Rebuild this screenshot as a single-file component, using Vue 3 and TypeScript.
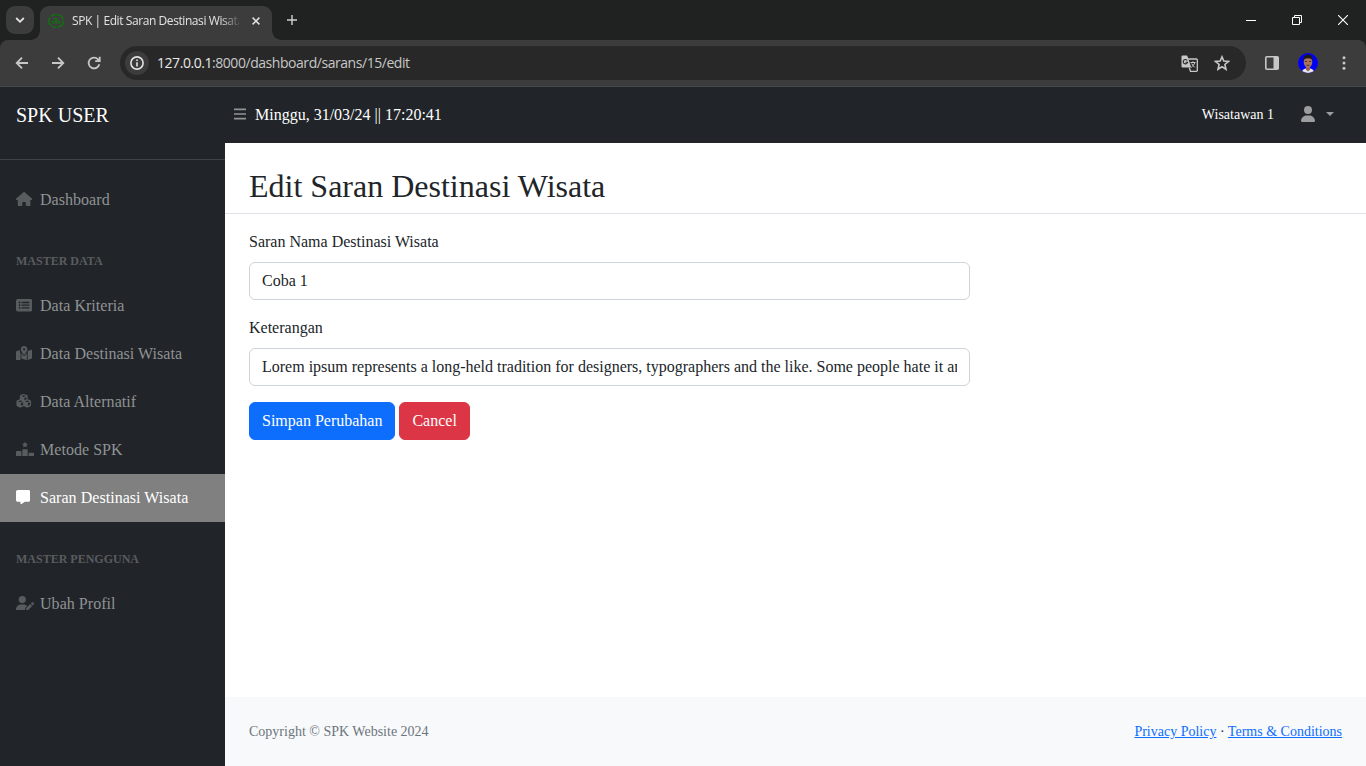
<script setup lang="ts">
import { ref } from 'vue'

interface MenuItem {
  label: string
  icon: string
  box: string
  width: number
  active?: boolean
}

interface MenuSection {
  heading: string
  items: MenuItem[]
}

const icons = {
  house:
    'M575.8 255.5c0 18-15 32.1-32 32.1h-32l.7 160.2c0 2.7-.2 5.4-.5 8.1V472c0 22.1-17.9 40-40 40H456c-1.1 0-2.2 0-3.3-.1c-1.4 .1-2.8 .1-4.2 .1H416 392c-22.1 0-40-17.9-40-40V448 384c0-17.7-14.3-32-32-32H256c-17.7 0-32 14.3-32 32v64 24c0 22.1-17.9 40-40 40H160 128.1c-1.5 0-3-.1-4.5-.2c-1.2 .1-2.4 .2-3.6 .2H104c-22.1 0-40-17.9-40-40V360c0-.9 0-1.9 .1-2.8V287.6H32c-18 0-32-14-32-32.1c0-9 3-17 10-24L266.4 8c7-7 15-8 22-8s15 2 21 7L564.8 231.5c8 7 12 15 11 24z',
  list:
    'M64 32h448a64 64 0 0 1 64 64v320a64 64 0 0 1-64 64H64a64 64 0 0 1-64-64V96a64 64 0 0 1 64-64zM96 160a32 32 0 1 0 64 0a32 32 0 1 0-64 0zM96 256a32 32 0 1 0 64 0a32 32 0 1 0-64 0zM96 352a32 32 0 1 0 64 0a32 32 0 1 0-64 0zM216 136a24 24 0 0 0 0 48h240a24 24 0 0 0 0-48zM216 232a24 24 0 0 0 0 48h240a24 24 0 0 0 0-48zM216 328a24 24 0 0 0 0 48h240a24 24 0 0 0 0-48z',
  map:
    'M408 120c0 54.6-73.1 151.9-105.2 192c-7.7 9.6-22 9.6-29.6 0C241.1 271.9 168 174.6 168 120C168 53.7 221.7 0 288 0s120 53.7 120 120zM288 160a40 40 0 1 0 0-80a40 40 0 1 0 0 80zM425 180l118-47c16-6 33 5 33 22v269c0 10-6 19-15 22L416 503V202c3-7 6-15 9-22zM138 202c5 15 12 31 22 47v253L33 504C17 510 0 499 0 482V213c0-10 6-19 15-22l122-49c1 20 1 40 1 60zM327 332c14-17 35-45 57-79v250l-192-55V253c22 34 43 62 57 79c20 26 58 26 78 0z',
  cubes:
    'M290 3c-8-3-16-3-24 0L176 38c-16 6-26 21-26 37v112L55 224c-16 7-27 22-27 39v138c0 16 9 30 24 37l94 43c11 5 24 5 35 0l107-50l107 50c11 5 24 5 35 0l94-43c15-7 24-21 24-37V263c0-17-11-32-27-39l-95-37V75c0-16-10-31-26-37zM288 45l76 29l-76 31l-76-31zM310 145l74-30v72l-74 31zM166 227l78 30l-78 33l-78-33zM188 328l78-33v85l-78 37zM410 227l78 30l-78 33l-78-33zM432 328l78-33v85l-78 37z',
  ranking:
    'M353.8 54.1L330.2 6.3c-3.9-8.3-16.1-8.6-20.4 0L286.2 54.1l-52.3 7.5c-9.3 1.4-13.3 12.9-6.4 19.8l38 37-9 52.1c-1.4 9.3 8.2 16.5 16.8 12.2l46.9-24.8 46.6 24.4c8.6 4.3 18.3-2.9 16.8-12.2l-9-52.1 38-36.6c6.8-6.8 2.9-18.3-6.4-19.8zM256 256c-17.7 0-32 14.3-32 32v192c0 17.7 14.3 32 32 32h128c17.7 0 32-14.3 32-32V288c0-17.7-14.3-32-32-32zM32 320c-17.7 0-32 14.3-32 32v128c0 17.7 14.3 32 32 32h128c17.7 0 32-14.3 32-32V352c0-17.7-14.3-32-32-32zM448 416v64c0 17.7 14.3 32 32 32h128c17.7 0 32-14.3 32-32v-64c0-17.7-14.3-32-32-32H480c-17.7 0-32 14.3-32 32z',
  message:
    'M64 0C28.7 0 0 28.7 0 64V352c0 35.3 28.7 64 64 64h96v80c0 6.1 3.4 11.6 8.8 14.3s11.9 2.1 16.8-1.5L309.3 416H448c35.3 0 64-28.7 64-64V64c0-35.3-28.7-64-64-64z',
  userPen:
    'M224 256A128 128 0 1 0 224 0a128 128 0 1 0 0 256zm-45.7 48C79.8 304 0 383.8 0 482.3C0 498.7 13.3 512 29.7 512H322.8c-3.1-8.8-3.7-18.4-1.4-27.8l15-60.1c2.8-11.3 8.6-21.5 16.8-29.7l40.3-40.3c-32.1-31-75.7-50.1-123.9-50.1H178.3zm435.5-68.3c-15.6-15.6-40.9-15.6-56.6 0l-29.4 29.4 71 71 29.4-29.4c15.6-15.6 15.6-40.9 0-56.6l-14.4-14.4zM375.9 417c-4.1 4.1-7 9.2-8.4 14.9l-15 60.1c-1.4 5.5 .2 11.2 4.2 15.2s9.7 5.6 15.2 4.2l60.1-15c5.6-1.4 10.8-4.3 14.9-8.4L576.1 358.7l-71-71L375.9 417z',
  user:
    'M224 256A128 128 0 1 0 224 0a128 128 0 1 0 0 256zm-45.7 48C79.8 304 0 383.8 0 482.3C0 498.7 13.3 512 29.7 512H418.3c16.4 0 29.7-13.3 29.7-29.7C448 383.8 368.2 304 269.7 304H178.3z',
}

const sections: MenuSection[] = [
  {
    heading: '',
    items: [{ label: 'Dashboard', icon: icons.house, box: '0 0 576 512', width: 16.2 }],
  },
  {
    heading: 'Master Data',
    items: [
      { label: 'Data Kriteria', icon: icons.list, box: '0 0 576 512', width: 16.2 },
      { label: 'Data Destinasi Wisata', icon: icons.map, box: '0 0 576 512', width: 16.2 },
      { label: 'Data Alternatif', icon: icons.cubes, box: '28 0 520 512', width: 15.5 },
      { label: 'Metode SPK', icon: icons.ranking, box: '0 0 640 512', width: 18 },
      { label: 'Saran Destinasi Wisata', icon: icons.message, box: '0 0 512 512', width: 14.4, active: true },
    ],
  },
  {
    heading: 'Master Pengguna',
    items: [{ label: 'Ubah Profil', icon: icons.userPen, box: '0 0 640 512', width: 18 }],
  },
]

const nama = ref('Coba 1')
const keterangan = ref(
  'Lorem ipsum represents a long-held tradition for designers, typographers and the like. Some people hate it and argue for its demise, but others ignore the hate.',
)
</script>

<template>
  <div class="window">
    <header class="tabstrip">
      <button class="tab-search" aria-label="Search tabs">
        <svg width="10" height="10" viewBox="0 0 10 10"><path d="M1.2 3L5 6.8L8.8 3" fill="none" stroke="#e3e3e3" stroke-width="1.8" /></svg>
      </button>
      <div class="tab">
        <svg class="favicon" width="16" height="16" viewBox="0 0 16 16" fill="none" stroke="#0b7a0b">
          <ellipse cx="8" cy="8" rx="7.3" ry="6.3" stroke-width="1.3" stroke-dasharray="9 1.2 5 .8" />
          <path d="M5.500 5.500h4M4 8.500h2M7 8.500h2M10 8.500h2M6 7h4.500M3.500 10h9" stroke-width=".9" />
        </svg>
        <span class="tab-title">SPK | Edit Saran Destinasi Wisata</span>
        <svg class="tab-close" width="8" height="8" viewBox="0 0 8 8"><path d="M.6.6L7.4 7.4M7.4.6L.6 7.4" stroke="#e3e3e3" stroke-width="1.5" /></svg>
      </div>
      <svg class="new-tab" width="12" height="12" viewBox="0 0 12 12"><path d="M6 1v10M1 6h10" stroke="#d0d0d0" stroke-width="1.4" /></svg>
      <div class="window-controls">
        <svg width="10" height="10" viewBox="0 0 10 10"><path d="M0 5.500h10" stroke="#fff" /></svg>
        <svg width="10" height="10" viewBox="0 0 10 10" fill="none" stroke="#fff"><path d="M.5 2.500h7v7h-7zM2.500 2.500v-2h7v7h-2" /></svg>
        <svg width="10" height="10" viewBox="0 0 10 10"><path d="M0 0L10 10M10 0L0 10" stroke="#fff" stroke-width="1.1" /></svg>
      </div>
    </header>

    <div class="toolbar">
      <div class="nav-buttons">
        <svg width="14" height="14" viewBox="0 0 14 14" fill="none" stroke="#c7c7c7" stroke-width="1.8"><path d="M13 7H2M7 1.7L1.7 7L7 12.3" /></svg>
        <svg width="14" height="14" viewBox="0 0 14 14" fill="none" stroke="#c7c7c7" stroke-width="1.8"><path d="M1 7H12M7 1.7L12.3 7L7 12.3" /></svg>
        <svg width="14" height="14" viewBox="0 0 14 14" fill="none" stroke="#c7c7c7" stroke-width="1.8"><path d="M12.3 8.2A5.400 5.400 0 1 1 11 3.3L12.5 5M12.7.8V5.2H8.2" /></svg>
      </div>
      <div class="omnibox">
        <span class="site-info">
          <svg width="14" height="14" viewBox="0 0 14 14"><circle cx="7" cy="7" r="6.1" fill="none" stroke="#e3e3e3" stroke-width="1.6" /><path d="M7 6.2v4.300M7 3.500v1.500" stroke="#e3e3e3" stroke-width="1.6" /></svg>
        </span>
        <span class="url"><b>127.0.0.1</b>:8000/dashboard/sarans/15/edit</span>
        <svg class="translate" width="17" height="17" viewBox="0 0 17 17">
          <path d="M1.500 .5H6l1 2h0l3.200 10H1.500a1 1 0 0 1-1-1V1.500a1 1 0 0 1 1-1z" fill="#c7c7c7" />
          <path d="M7.200 4H15.500a.8.8 0 0 1 .8.8V15.500a.8.8 0 0 1-.8.8H9.500L8.300 12.800" fill="none" stroke="#c7c7c7" stroke-width="1.3" />
          <path d="M6.300 5.600A2.200 2.200 0 1 0 6.500 7.300H4.600" fill="none" stroke="#282828" stroke-width="1.1" />
          <path d="M9.500 7.500h5M12 6.300v1.200M13.800 7.500c-.6 2.200-2 3.700-3.500 4.800M10.700 8.500c.6 1.500 1.800 2.800 3.200 4" fill="none" stroke="#c7c7c7" />
        </svg>
        <svg class="star" width="16" height="16" viewBox="0 0 16 16"><path d="M8 1.800L9.800 6l4.700.4l-3.600 3.100l1.100 4.700L8 11.700L4 14.200l1.100-4.700L1.500 6.400L6.200 6z" fill="none" stroke="#c7c7c7" stroke-width="1.6" /></svg>
      </div>
      <svg class="side-panel" width="14" height="14" viewBox="0 0 14 14"><rect x=".8" y=".8" width="12.4" height="12.4" rx="1" fill="none" stroke="#c7c7c7" stroke-width="1.6" /><path d="M8.500 1h5v12h-5z" fill="#c7c7c7" /></svg>
      <svg class="avatar" width="20" height="20" viewBox="0 0 20 20">
        <defs><clipPath id="round"><circle cx="10" cy="10" r="10" /></clipPath></defs>
        <g clip-path="url(#round)">
          <path d="M0 0h20v20H0z" fill="#0000fa" />
          <path d="M3.500 20c0-2.500 1.500-3.500 4-4.500h5c2.500 1 4 2 4 4.500z" fill="#e8e4ee" />
          <path d="M8 12h4v4.500l-2 2l-2-2z" fill="#96634d" />
          <ellipse cx="10" cy="8.800" rx="4.300" ry="5.900" fill="#a9745e" />
          <path d="M5.300 8.500C4.700 3.500 7 1.500 10 1.500S15.300 3.500 14.700 8.500L13.500 6C11 5 9 5 6.500 6z" fill="#1d1717" />
          <path d="M6.800 8.500h2.200M11 8.500h2.200M8.500 12.300h3" stroke="#4a2b26" stroke-width=".9" />
        </g>
      </svg>
      <svg class="kebab" width="4" height="14" viewBox="0 0 4 14" fill="#c7c7c7"><circle cx="2" cy="1.8" r="1.5" /><circle cx="2" cy="7" r="1.5" /><circle cx="2" cy="12.2" r="1.5" /></svg>
    </div>

    <div class="page">
      <nav class="topnav">
        <a class="brand">SPK USER</a>
        <svg class="burger" width="12" height="12" viewBox="0 0 12 12"><path d="M0 1.300h12M0 6h12M0 10.700h12" stroke="#919396" stroke-width="1.700" /></svg>
        <span class="clock">Minggu, 31/03/24 || 17:20:41</span>
        <span class="account">Wisatawan 1</span>
        <svg class="account-icon" width="14" height="16" viewBox="0 0 448 512"><path :d="icons.user" fill="#9b9d9f" /></svg>
        <span class="caret"></span>
      </nav>

      <div class="body">
        <aside class="sidebar">
          <div v-for="(section, i) in sections" :key="i" class="section">
            <div v-if="section.heading" class="heading">{{ section.heading }}</div>
            <a v-for="item in section.items" :key="item.label" class="item" :class="{ active: item.active }">
              <span class="icon">
                <svg :width="item.width" height="14.4" :viewBox="item.box"><path :d="item.icon" fill="currentColor" fill-rule="evenodd" /></svg>
              </span>
              <span>{{ item.label }}</span>
            </a>
          </div>
        </aside>

        <div class="content">
          <main>
            <div class="title-bar"><h1>Edit Saran Destinasi Wisata</h1></div>
            <form class="form" @submit.prevent>
              <label for="nama">Saran Nama Destinasi Wisata</label>
              <input id="nama" v-model="nama" type="text" />
              <label for="keterangan">Keterangan</label>
              <input id="keterangan" v-model="keterangan" type="text" spellcheck="false" />
              <div class="actions">
                <button class="btn primary" type="submit">Simpan Perubahan</button>
                <button class="btn danger" type="button">Cancel</button>
              </div>
            </form>
          </main>
          <footer class="footer">
            <span>Copyright © SPK Website 2024</span>
            <span class="links"><a>Privacy Policy</a> · <a>Terms &amp; Conditions</a></span>
          </footer>
        </div>
      </div>
    </div>
  </div>
</template>

<style>
body {
  overflow: hidden;
}
</style>

<style scoped>
* {
  box-sizing: border-box;
}
svg {
  display: block;
  flex: none;
}
.window {
  display: flex;
  flex-direction: column;
  width: 1366px;
  height: 766px;
  overflow: hidden;
  background: #202221;
  color: #212529;
  font-family: 'Liberation Serif', 'Times New Roman', serif;
  font-size: 16px;
  line-height: 24px;
}

/* browser frame */
.tabstrip {
  display: flex;
  align-items: center;
  flex: none;
  height: 40px;
  padding-left: 6px;
  font-family: 'Open Sans', 'Noto Sans', sans-serif;
}
.tab-search {
  display: grid;
  place-items: center;
  width: 28px;
  height: 28px;
  padding: 0;
  border: 0;
  border-radius: 9px;
  background: #3c3c3c;
}
.tab {
  position: relative;
  display: flex;
  align-items: center;
  align-self: flex-end;
  width: 232px;
  height: 34px;
  margin-left: 6px;
  padding: 0 12px 5px 8px;
  border-radius: 9px 9px 0 0;
  background: #3c3c3c;
}
.tab::before,
.tab::after {
  content: '';
  position: absolute;
  bottom: 0;
  width: 9px;
  height: 9px;
}
.tab::before {
  right: 100%;
  background: radial-gradient(circle at 0 0, transparent 8.5px, #3c3c3c 9px);
}
.tab::after {
  left: 100%;
  background: radial-gradient(circle at 100% 0, transparent 8.5px, #3c3c3c 9px);
}
.tab-title {
  flex: none;
  width: 167px;
  margin-left: 8px;
  overflow: hidden;
  white-space: nowrap;
  color: #e3e3e3;
  font-size: 12px;
  line-height: 18px;
  letter-spacing: -0.42px;
  mask-image: linear-gradient(90deg, #000 148px, transparent 170px);
}
.tab-close {
  margin-left: auto;
}
.new-tab {
  margin-left: 14px;
}
.window-controls {
  display: flex;
  gap: 36px;
  margin: 0 18px 0 auto;
}
.toolbar {
  display: flex;
  align-items: center;
  flex: none;
  height: 47px;
  padding: 0 20px 0 15px;
  border-bottom: 1px solid #484a4a;
  border-radius: 8px 8px 0 0;
  background: #3c3c3c;
  font-family: 'Open Sans', 'Noto Sans', sans-serif;
}
.nav-buttons {
  display: flex;
  gap: 22px;
}
.omnibox {
  display: flex;
  align-items: center;
  width: 1126px;
  height: 34px;
  margin-left: 19px;
  padding: 0 16px 0 5px;
  border-radius: 17px;
  background: #282828;
}
.site-info {
  display: grid;
  place-items: center;
  width: 24px;
  height: 24px;
  border-radius: 50%;
  background: #3c3c3c;
}
.url {
  margin: 0 auto 0 8px;
  color: #c7c7c7;
  font-size: 14px;
  line-height: 20px;
  letter-spacing: -0.45px;
}
.url b {
  color: #e8e8e8;
  font-weight: 400;
}
.star {
  margin-left: 16px;
}
.side-panel {
  margin-left: 19px;
}
.avatar {
  margin-left: 19px;
}
.kebab {
  margin-left: auto;
}

/* web page */
.page {
  display: flex;
  flex: 1;
  flex-direction: column;
  min-height: 0;
}
.topnav {
  display: flex;
  align-items: center;
  flex: none;
  height: 56px;
  padding: 0 32px 0 16px;
  background: #212529;
  color: #fff;
}
.brand {
  width: 218px;
  font-size: 20px;
}
.burger {
  margin-bottom: 2px;
}
.clock {
  margin-left: 9px;
}
.account {
  margin-left: auto;
  font-size: 14px;
}
.account-icon {
  margin: 0 0 2px 27px;
}
.caret {
  margin: 0 0 2px 11px;
  border: 4px solid transparent;
  border-top-color: #9b9d9f;
  border-bottom: 0;
}
.body {
  display: flex;
  flex: 1;
  min-height: 0;
}
.sidebar {
  flex: none;
  width: 225px;
  padding-top: 16px;
  background: #212529;
}
.section:first-child {
  padding-top: 16px;
  border-top: 1px solid #404346;
}
.heading {
  padding: 28px 16px 12px;
  color: #595c5f;
  font-size: 12px;
  font-weight: 700;
  line-height: 18px;
  text-transform: uppercase;
}
.item {
  display: flex;
  align-items: center;
  height: 48px;
  padding-left: 16px;
  color: #909294;
  letter-spacing: 0.04px;
  white-space: nowrap;
}
.icon {
  width: 24px;
  padding-bottom: 2px;
  color: #595c5f;
}
.item.active {
  background: #808080;
  color: #fff;
}
.item.active .icon {
  color: #fff;
}
.content {
  display: flex;
  flex: 1;
  flex-direction: column;
  justify-content: space-between;
  min-width: 0;
  background: #fff;
}
.title-bar {
  height: 71px;
  padding: 24px 24px 0;
  border-bottom: 1px solid #dee2e6;
}
h1 {
  margin: 0;
  font-size: 32px;
  font-weight: 500;
  line-height: 38.4px;
}
.form {
  display: flex;
  flex-direction: column;
  width: 745px;
  padding: 16px 0 0 24px;
}
label {
  margin-bottom: 8px;
}
input {
  height: 38px;
  margin: 0 0 16px;
  padding: 6px 12px;
  border: 1px solid #ced4da;
  border-radius: 6px;
  background: #fff;
  color: #212529;
  font: inherit;
}
.actions {
  display: flex;
  gap: 4px;
}
.btn {
  height: 38px;
  padding: 6px 12px;
  border: 1px solid;
  border-radius: 6px;
  color: #fff;
  font: inherit;
  white-space: nowrap;
}
.primary {
  border-color: #0d6efd;
  background: #0d6efd;
}
.danger {
  border-color: #dc3545;
  background: #dc3545;
}
.footer {
  display: flex;
  align-items: center;
  justify-content: space-between;
  height: 69px;
  padding: 0 24px;
  background: #f8f9fa;
  color: #6c757d;
  font-size: 14px;
  line-height: 21px;
}
.links {
  color: #212529;
}
.links a {
  color: #0d6efd;
  text-decoration: underline;
}
</style>
